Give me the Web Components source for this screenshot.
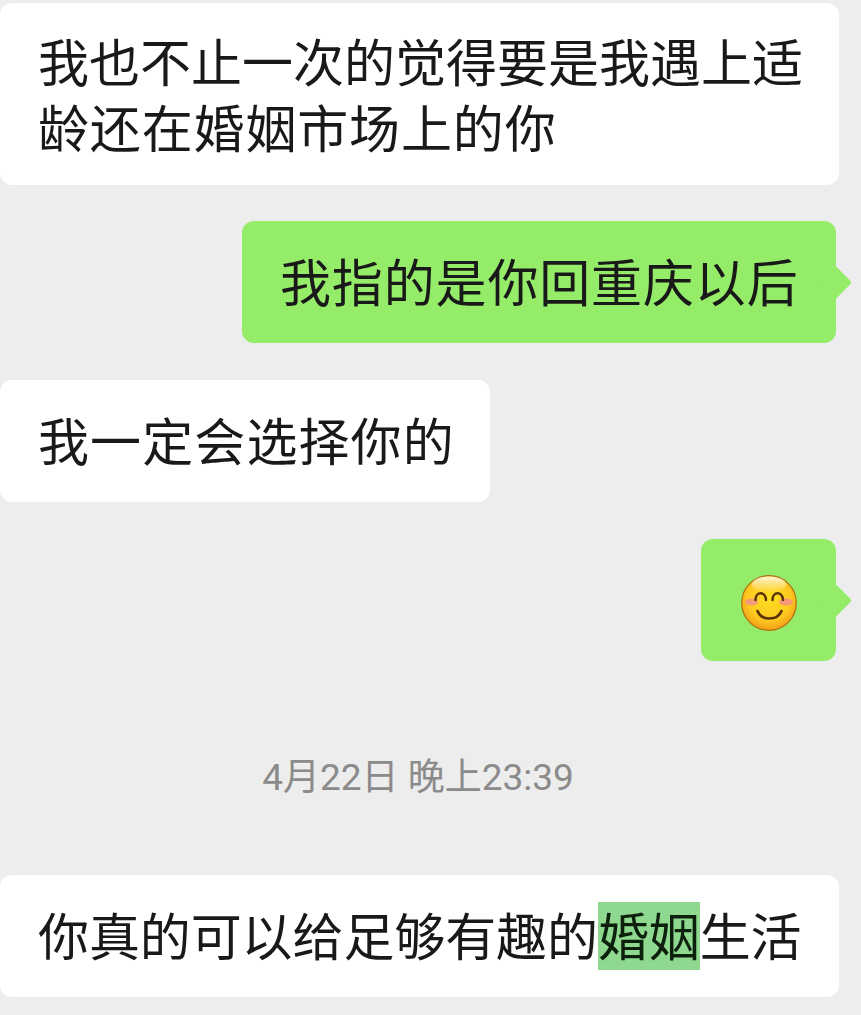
<!DOCTYPE html>
<html lang="zh">
<head>
<meta charset="utf-8">
<title>聊天记录</title>
<style>
  html, body { margin: 0; padding: 0; background: #ededed; }
  body { width: 861px; height: 1015px; overflow: hidden; }
  chat-bubble.first { margin-top: 3px; }
  chat-bubble.gap36 { margin-top: 36px; }
  chat-bubble.gap37 { margin-top: 37px; }
  .loose { letter-spacing: .85px; }
</style>
</head>
<body>
<chat-list>
  <chat-bubble class="first wide two-line">我也不止一次的觉得要是我遇上适<span class="loose">龄还在婚姻市场上的你</span></chat-bubble>
  <chat-bubble class="gap36" side="me" style="--track: .85px">我指的是你回重庆以后</chat-bubble>
  <chat-bubble class="gap37" style="--track: 1.1px; --end: 35px">我一定会选择你的</chat-bubble>
  <chat-bubble class="gap37" side="me" emoji><smile-emoji></smile-emoji></chat-bubble>
  <chat-time>4月22日 晚上23:39</chat-time>
  <chat-bubble class="wide" style="--track: -.1px">你真的可以给足够有趣的<search-mark>婚姻</search-mark>生活</chat-bubble>
</chat-list>

<script>
class ChatList extends HTMLElement {
    constructor() {
        super();
        this.attachShadow({ mode: 'open' });
        this.shadowRoot.innerHTML = `
            <style>
                :host {
                    display: flex;
                    flex-direction: column;
                    align-items: flex-start;
                    font-family: "Noto Sans CJK SC", "Liberation Sans", sans-serif;
                    color: #191919;
                }
            </style>
            <slot></slot>
        `;
    }
}

class ChatBubble extends HTMLElement {
    constructor() {
        super();
        this.attachShadow({ mode: 'open' });
        this.shadowRoot.innerHTML = `
            <style>
                :host {
                    display: block;
                    position: relative;
                    box-sizing: border-box;
                    height: 122px;
                    background: #fff;
                    border-radius: 12px;
                    padding: 26px var(--end, 37.500px) 30px 38px;
                    font-size: 51px;
                    line-height: 66px;
                    letter-spacing: var(--track, 0);
                }
                :host(.wide) { width: 839px; padding-right: 20px; }
                :host(.two-line) { height: 182px; padding-top: 24px; padding-bottom: 26px; }
                :host([side="me"]) {
                    align-self: flex-end;
                    margin-right: 25px;
                    background: #95ec69;
                }
                :host([emoji]) { padding: 36px 39px 29px 40px; line-height: 0; }
                .tail { display: none; }
                :host([side="me"]) .tail {
                    display: block;
                    position: absolute;
                    top: 50%;
                    right: -11px;
                    width: 25px;
                    height: 25px;
                    margin-top: -12.500px;
                    background: #95ec69;
                    border-radius: 3px;
                    transform: rotate(45deg);
                }
            </style>
            <span class="tail"></span>
            <slot></slot>
        `;
    }
}

class ChatTime extends HTMLElement {
    constructor() {
        super();
        this.attachShadow({ mode: 'open' });
        this.shadowRoot.innerHTML = `
            <style>
                :host {
                    display: block;
                    align-self: center;
                    margin: 92px 25px 72px 0;
                    font-family: Roboto, "Noto Sans CJK SC", sans-serif;
                    font-size: 37px;
                    line-height: 50px;
                    color: #8b8b8b;
                    white-space: nowrap;
                }
            </style>
            <slot></slot>
        `;
    }
}

class SearchMark extends HTMLElement {
    constructor() {
        super();
        this.attachShadow({ mode: 'open' });
        this.shadowRoot.innerHTML = `
            <style>
                :host {
                    display: inline-block;
                    vertical-align: top;
                    height: 68px;
                    margin: 1px 0 -3px;
                    line-height: 64px;
                    background: #8fd88f;
                    color: #0d1f0d;
                }
            </style>
            <slot></slot>
        `;
    }
}

class SmileEmoji extends HTMLElement {
    constructor() {
        super();
        this.attachShadow({ mode: 'open' });
        this.shadowRoot.innerHTML = `
            <style>
                :host { display: block; width: 56px; height: 56px; }
                svg { display: block; }
            </style>
            <svg width="56" height="56" viewBox="0 0 56 56">
                <defs>
                    <radialGradient id="face" cx="50%" cy="42%" r="62%">
                        <stop offset="0" stop-color="#ffdf20"/>
                        <stop offset="0.65" stop-color="#fdc820"/>
                        <stop offset="1" stop-color="#ee9416"/>
                    </radialGradient>
                    <linearGradient id="shine" x1="0" y1="0" x2="0" y2="1">
                        <stop offset="0" stop-color="#fff" stop-opacity="0.8"/>
                        <stop offset="1" stop-color="#fff" stop-opacity="0"/>
                    </linearGradient>
                </defs>
                <circle cx="28" cy="28" r="27.300" fill="url(#face)" stroke="#b0700e" stroke-width="1.200"/>
                <ellipse cx="28" cy="9.500" rx="17" ry="8" fill="url(#shine)"/>
                <ellipse cx="10.500" cy="27" rx="6.500" ry="3.500" fill="#f79a78"/>
                <ellipse cx="45" cy="27" rx="7" ry="3.500" fill="#f79a78"/>
                <path d="M14.500 25c0-9 10-9 10.500 0M31.500 25c0-9 10-9 10.500 0" fill="none" stroke="#5a3208" stroke-width="2.500" stroke-linecap="round"/>
                <path d="M16.500 36c4 10 20 10 24 0" fill="none" stroke="#5a3208" stroke-width="2.600" stroke-linecap="round"/>
            </svg>
        `;
    }
}

customElements.define('chat-list', ChatList);
customElements.define('chat-bubble', ChatBubble);
customElements.define('chat-time', ChatTime);
customElements.define('search-mark', SearchMark);
customElements.define('smile-emoji', SmileEmoji);
</script>
</body>
</html>
